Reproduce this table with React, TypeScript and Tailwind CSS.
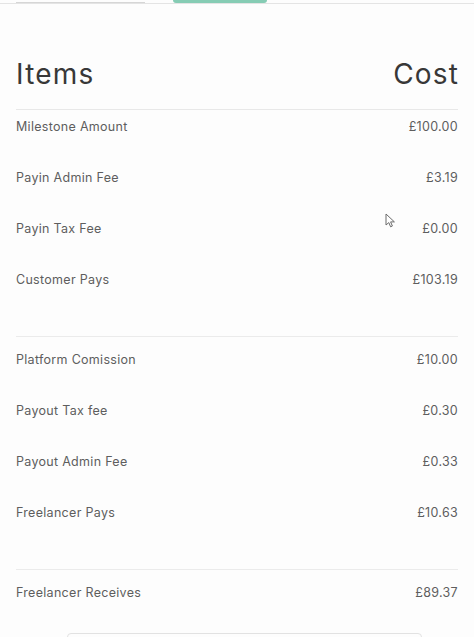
import React from "react";

type Row = { label: string; cost: string };

const payin: Row[] = [
  { label: "Milestone Amount", cost: "£100.00" },
  { label: "Payin Admin Fee", cost: "£3.19" },
  { label: "Payin Tax Fee", cost: "£0.00" },
  { label: "Customer Pays", cost: "£103.19" },
];

const payout: Row[] = [
  { label: "Platform Comission", cost: "£10.00" },
  { label: "Payout Tax fee", cost: "£0.30" },
  { label: "Payout Admin Fee", cost: "£0.33" },
  { label: "Freelancer Pays", cost: "£10.63" },
];

function Line({ row }: { row: Row }) {
  return (
    <div className="flex h-[18px] items-center justify-between text-[12.5px] leading-[18px] tracking-[0.3px] text-[#5e5e5e]">
      <span>{row.label}</span>
      <span>{row.cost}</span>
    </div>
  );
}

function Cursor() {
  return (
    <svg
      className="absolute left-[385px] top-[213px]"
      width="11"
      height="16"
      viewBox="0 0 11 16"
      fill="none"
    >
      <path
        d="M1 1 L1 12 L3.8 9.6 L5.6 13.8 L7.4 13 L5.6 8.9 L9.4 8.9 Z"
        fill="#fff"
        stroke="#6b6b6b"
        strokeWidth="1"
        strokeLinejoin="round"
      />
    </svg>
  );
}

export default function App() {
  return (
    <div
      className="relative h-[637px] w-full overflow-hidden bg-[#fdfdfd]"
      style={{ fontFamily: "Inter, 'Noto Sans', sans-serif" }}
    >
      {/* tab strip */}
      <div className="flex h-[4px] items-start border-b border-[#e4e4e4]">
        <div className="ml-4 mt-[2px] h-[1px] w-[129px] bg-[#d6d6d6]" />
        <div className="ml-[28px] h-[3px] w-[94px] rounded-b-sm bg-[#86ccb4]" />
      </div>

      <div className="px-4">
        <div className="mt-[56px] flex items-center justify-between border-b border-[#e8e8e8] pb-[21px] text-[28px] leading-[28px] tracking-[1.2px] text-[#383838]">
          <span>Items</span>
          <span className="-mr-[1.2px]">Cost</span>
        </div>

        <div className="flex flex-col gap-[33px] pt-[8px]">
          {payin.map((r) => (
            <Line key={r.label} row={r} />
          ))}
        </div>

        <div className="mt-[47px] flex flex-col gap-[33px] border-t border-[#ebebeb] pt-[14px]">
          {payout.map((r) => (
            <Line key={r.label} row={r} />
          ))}
        </div>

        <div className="mt-[47px] border-t border-[#ebebeb] pt-[14px]">
          <Line row={{ label: "Freelancer Receives", cost: "£89.37" }} />
        </div>

        <div className="ml-[51px] mr-[36px] mt-[31px] h-10 rounded-sm border border-[#e2e2e2]" />
      </div>

      <Cursor />
    </div>
  );
}
